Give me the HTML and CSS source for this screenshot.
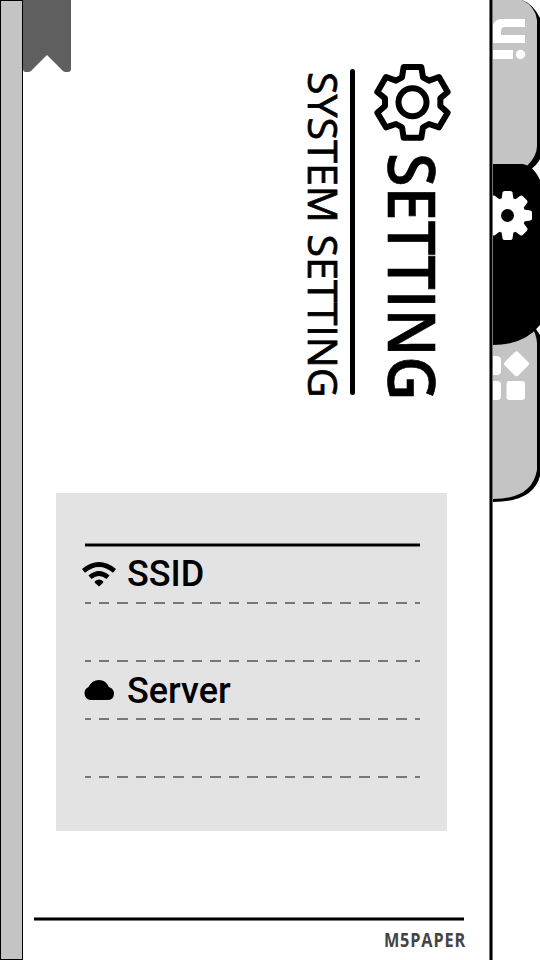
FILE: index.html
```html
<!DOCTYPE html>
<html lang="en">
<head>
<meta charset="utf-8">
<title>M5Paper Setting</title>
<link rel="stylesheet" href="styles.css">
</head>
<body>
<div class="screen">
  <div class="spine"></div>
  <main class="page">
    <svg class="bookmark" width="48" height="72" viewBox="0 0 48 72"><path d="M0 0H48V69Q48 72 45 72H43Q41 72 40 71L24 55L8 71Q7 72 5 72H3Q0 72 0 69Z" fill="#5f5f5f"/></svg>
    <header class="heading">
      <div class="title-row">
        <svg class="gear" width="77" height="77" viewBox="252 42 231 231" fill="none" stroke="#000" stroke-width="18" stroke-linejoin="round"><path d="M341 51H394L399 82L417 92L447 81L473 126L451 145V168L473 188L447 232L417 222L399 232L394 263H341L336 232L318 222L288 232L262 188L285 168V145L262 126L288 81L318 92L336 82Z"/><circle cx="367.500" cy="157" r="42"/></svg>
        <h1>SETTING</h1>
      </div>
      <div class="title-rule"></div>
      <h2>SYSTEM SETTING</h2>
    </header>
    <section class="panel">
      <div class="rule"></div>
      <div class="row ssid">
        <svg class="icon" width="36" height="28" viewBox="0 0 36 28" fill="none" stroke="#000" stroke-width="4.800"><path d="M1.500 9.800Q17-2.800 32.500 9.800"/><path d="M8 16.300Q17 8.600 26 16.300"/><path d="M12.800 20.300Q17 16.500 21.200 20.300V21.800L17 25.500L12.800 21.800Z" fill="#000" stroke="none"/></svg>
        <span>SSID</span>
      </div>
      <div class="dash"></div>
      <div class="row"></div>
      <div class="dash"></div>
      <div class="row server">
        <svg class="icon" width="36" height="28" viewBox="0 0 36 28"><path d="M8 24A6.900 6.900 0 0 1 6.500 11Q10 4 17 4Q24 4 26.800 11Q32 12.500 32 18Q31.500 24 25.500 24Z"/></svg>
        <span>Server</span>
      </div>
      <div class="dash"></div>
      <div class="row"></div>
      <div class="dash"></div>
    </section>
    <footer class="footer"><div class="rule"></div><p>M5PAPER</p></footer>
  </main>
  <div class="divider"></div>
  <nav class="tabs">
    <svg width="47" height="960" viewBox="493 0 47 960">
      <path d="M493 0H522Q533 4 540 18V159Q537 165 530 170H493Z"/>
      <path d="M493 0H522Q535 6 537 20V146Q537 156 527 166H493Z" fill="#c4c4c4"/>
      <path d="M493 320H530L540 335V476Q533 502 493 502Z"/>
      <path d="M493 320H528Q537 334 537 343V470Q532 499 493 499Z" fill="#c4c4c4"/>
      <path d="M493 164H522Q533 165 540 180V325Q524 345 493 345Z"/>
      <g fill="#fff">
        <path d="M525 19H502Q493 19 492 29V43H525V35H501V31Q501 27 505 27H525Z"/>
        <path d="M493 50H513V59H493Z"/><circle cx="520.500" cy="54.500" r="4.700"/>
        <path d="M493 356H496Q501 356 501 360V371Q501 375 497 375H493Z"/>
        <path d="M493 381H497Q501 381 501 385V396Q501 400 497 400H493Z"/>
        <rect x="506.500" y="381" width="18.500" height="19" rx="3"/>
        <rect x="507" y="354.300" width="19" height="19" rx="2.500" transform="rotate(45 516.500 363.800)"/>
      </g>
      <g fill="#fff" transform="translate(507.500 215.500)">
        <circle r="18"/>
        <g id="teeth"><path id="tooth" d="M-6-16L-5-23Q-4.500-24.500-3-24.500H3Q4.500-24.500 5-23L6-16Z"/><use href="#tooth" transform="rotate(45)"/></g>
        <use href="#teeth" transform="rotate(90)"/><use href="#teeth" transform="rotate(180)"/><use href="#teeth" transform="rotate(270)"/>
        <circle r="6.500" fill="#000"/>
      </g>
    </svg>
  </nav>
</div>
</body>
</html>
```
FILE: styles.css
```css
* { box-sizing: border-box; }
body { margin: 0; background: #fff; color: #000; font-family: "Open Sans", sans-serif; }
h1, h2, p { margin: 0; }
svg { display: block; flex: none; }
.screen { display: flex; width: 540px; height: 960px; overflow: hidden; }
.spine { width: 23px; background: #c4c4c4; border: 1px solid #000; }
.page { display: flex; flex-direction: column; width: 466px; height: 960px; }
.divider { width: 4px; background: #000; border: solid #777; border-width: 0 1px; }
.tabs { width: 47px; }
.bookmark { margin-bottom: -8px; }
.heading { display: flex; flex: none; flex-direction: row-reverse; height: 429px; padding-right: 38px; }
.title-row { display: flex; flex-direction: column; align-items: center; width: 77px; }
h1, h2 { writing-mode: vertical-rl; white-space: nowrap; }
h1 { margin-top: 12px; font-size: 65px; line-height: 77px; font-weight: 650; transform: scaleY(.94); transform-origin: top; -webkit-text-stroke: 0.6px #000; }
.title-rule { width: 5px; height: 326px; margin: 5px 19px 0 0; border-radius: 3px; background: #000; }
h2 { margin: 7.5px 1.8px 0 0; font-size: 43px; line-height: 50px; font-weight: 500; word-spacing: 1px; transform: scale(.94, .958); transform-origin: top; -webkit-text-stroke: 0.8px #000; }
.panel { flex: none; width: 391px; height: 338px; margin-left: 33px; padding: 50px 27px 0 29px; background: #e3e3e3; }
.rule { height: 4px; background: #000; border: solid #777; border-width: 1px 0; }
.row { display: flex; align-items: center; height: 56px; font: 500 36px/56px Roboto, sans-serif; }
.ssid { height: 55px; }
.ssid span { margin-top: -1px; }
.server span { padding-top: 1px; }
.icon { margin: 0 9px 0 -3px; }
.dash { height: 2px; background: repeating-linear-gradient(90deg, #777 0 10.500px, transparent 10.500px 18.600px) -5px 0 / 400px 2px; }
.footer { width: 430px; margin: 86px 0 0 11px; }
.footer p { color: #444; font-size: 19.5px; line-height: 38px; font-weight: 700; letter-spacing: 1px; text-align: right; transform: scaleX(.835); transform-origin: right; margin-right: -2px; }
```
